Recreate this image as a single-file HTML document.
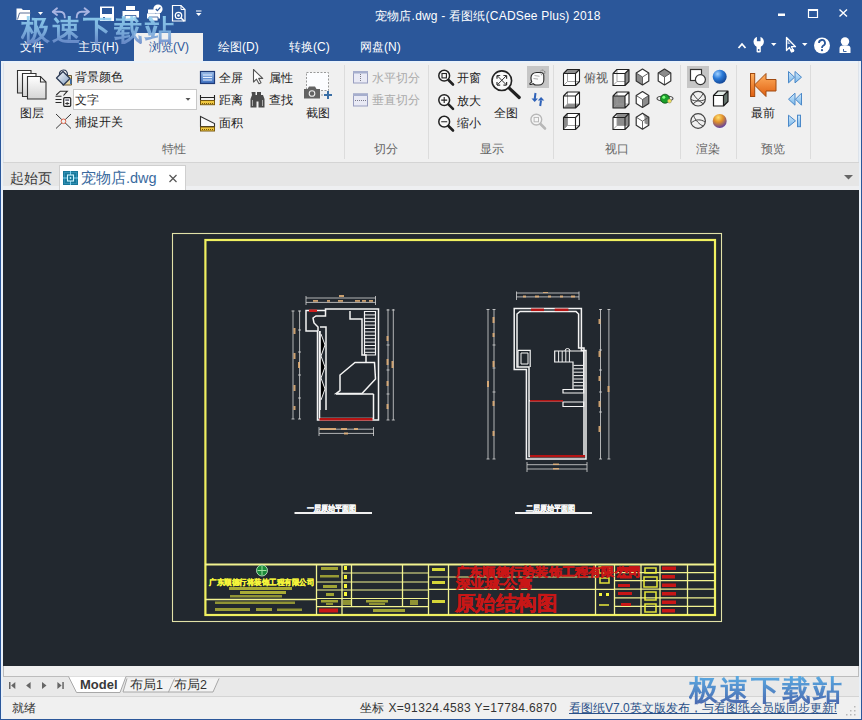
<!DOCTYPE html>
<html><head><meta charset="utf-8">
<style>
*{margin:0;padding:0;box-sizing:border-box}
html,body{width:862px;height:720px;overflow:hidden;background:#f0f0f0}
body{position:relative;font-family:"Liberation Sans",sans-serif;font-size:12px;color:#444}
.a{position:absolute;white-space:nowrap;line-height:1}
.tt{color:#fff;font-size:12px}
.sep{position:absolute;width:1px;background:#dcdcdc;top:65px;height:94px}
.gl{position:absolute;color:#666;font-size:12px;line-height:1;white-space:nowrap}
.lb{position:absolute;color:#222;font-size:12px;line-height:1;white-space:nowrap}
.wm{position:absolute;white-space:nowrap;line-height:1;font-family:"Liberation Sans",sans-serif;font-weight:bold;letter-spacing:0px}
</style></head><body>
<!-- header -->
<div class="a" style="left:0;top:0;width:862px;height:61px;background:#2b579a"></div>
<div class="a tt" style="left:375px;top:10px;font-size:12px;letter-spacing:0.2px">宠物店.dwg - 看图纸(CADSee Plus) 2018</div>
<div class="a" style="left:134px;top:33px;width:69px;height:29px;background:#f0f0f0"></div>
<div class="a tt" style="left:20px;top:41px">文件</div>
<div class="a tt" style="left:78px;top:41px">主页(H)</div>
<div class="a" style="left:149px;top:41px;color:#2b579a">浏览(V)</div>
<div class="a tt" style="left:218px;top:41px">绘图(D)</div>
<div class="a tt" style="left:289px;top:41px">转换(C)</div>
<div class="a tt" style="left:360px;top:41px">网盘(N)</div>

<!-- ribbon -->
<div class="a" style="left:1px;top:61px;width:860px;height:102px;background:#f0f0f0;border-bottom:1px solid #d4d4d4"></div>
<div class="a" style="left:3px;top:61px;width:1px;height:101px;background:#dde3ea"></div>
<div class="a" style="left:1px;top:61px;width:860px;height:2px;background:#eaf2fa"></div>
<div class="a" style="left:858px;top:61px;width:1px;height:101px;background:#dde3ea"></div>
<div class="sep" style="left:344px"></div>
<div class="sep" style="left:428px"></div>
<div class="sep" style="left:553px"></div>
<div class="sep" style="left:680px"></div>
<div class="sep" style="left:736px"></div>
<div class="sep" style="left:810px"></div>
<div class="gl" style="left:162px;top:143px">特性</div>
<div class="gl" style="left:374px;top:143px">切分</div>
<div class="gl" style="left:480px;top:143px">显示</div>
<div class="gl" style="left:605px;top:143px">视口</div>
<div class="gl" style="left:696px;top:143px">渲染</div>
<div class="gl" style="left:761px;top:143px">预览</div>

<div class="lb" style="left:20px;top:107px">图层</div>
<div class="lb" style="left:75px;top:71px">背景颜色</div>
<div class="a" style="left:73px;top:89px;width:124px;height:21px;background:#fff;border:1px solid #c8c8c8"></div>
<div class="lb" style="left:75px;top:94px">文字</div>
<div class="lb" style="left:75px;top:116px">捕捉开关</div>
<div class="lb" style="left:219px;top:72px">全屏</div>
<div class="lb" style="left:219px;top:94px">距离</div>
<div class="lb" style="left:219px;top:117px">面积</div>
<div class="lb" style="left:269px;top:72px">属性</div>
<div class="lb" style="left:269px;top:94px">查找</div>
<div class="lb" style="left:306px;top:107px">截图</div>
<div class="lb" style="left:372px;top:72px;color:#aaa">水平切分</div>
<div class="lb" style="left:372px;top:94px;color:#aaa">垂直切分</div>
<div class="lb" style="left:457px;top:72px">开窗</div>
<div class="lb" style="left:457px;top:95px">放大</div>
<div class="lb" style="left:457px;top:117px">缩小</div>
<div class="lb" style="left:494px;top:107px">全图</div>
<div class="lb" style="left:584px;top:72px;color:#555">俯视</div>
<div class="lb" style="left:751px;top:107px">最前</div>

<!-- doc tabs -->
<div class="a" style="left:1px;top:163px;width:860px;height:27px;background:#e6e6e6"></div>
<div class="a" style="left:1px;top:186px;width:860px;height:4px;background:#eeeff1"></div>
<div class="lb" style="left:10px;top:171px;font-size:14px;color:#3a3a3a">起始页</div>
<div class="a" style="left:59px;top:165px;width:127px;height:25px;background:#fff;border:1px solid #cfcfcf;border-bottom:none"></div>
<div class="a" style="left:81px;top:171px;font-size:14.5px;color:#3a6a9e">宠物店.dwg</div>

<!-- canvas -->
<div class="a" style="left:3px;top:190px;width:856px;height:476px;background:#22282f"></div>
<svg class="a" style="left:0;top:0" width="862" height="720" viewBox="0 0 862 720">
<g fill="none" stroke="#f2f290">
<rect x="172.5" y="233.5" width="549" height="388" stroke-width="1.1" stroke="#e2e2a8"/>
<rect x="205.4" y="240" width="509.6" height="375" stroke-width="2.2" stroke="#f0f060"/>
<path d="M205 564.5H715" stroke-width="1.8"/>
<path d="M205 599.5H316M316.5 564V615M342 564V615M351.5 564V606.5M402.5 564V606.5M428.5 564V615M448.5 564V615M595.5 564V615M614.5 564V615M641 564V615M660 564V615M687.5 564V615" stroke-width="1.3"/>
<path d="M342 573H428.5M316.5 582H428.5M316.5 590H428.5M316.5 598.5H428.5M316.5 606.6H428.5M428.5 577H595.5M428.5 589.3H595.5M595.5 589.3H614.5M614.5 572.6H715M614.5 580.7H715M614.5 589.2H715M614.5 597.8H715M614.5 606.4H715" stroke-width="1.2"/>
</g>
<circle cx="262" cy="570.5" r="5.5" fill="#1a8a3a" stroke="#d0f0d0" stroke-width="0.8"/><path d="M262 566v9M257.5 570.5h9" stroke="#9fe09f" stroke-width="1"/><g fill="#f5f53a" stroke="#f5f53a" stroke-width="0.3" font-family="Liberation Sans,sans-serif">
<text x="209" y="585" font-size="7.6" font-weight="bold" textLength="105" lengthAdjust="spacingAndGlyphs">广东顺德行将装饰工程有限公司</text>
</g>
<g fill="#f5f53a">
<rect x="229" y="587" width="63" height="3" opacity="0.64"/>
<rect x="240" y="591" width="46" height="3" opacity="0.64"/>
<rect x="230" y="595" width="52" height="2.5" opacity="0.52"/>
<rect x="215" y="601.5" width="80" height="2.5" opacity="0.52"/>
<rect x="215" y="608" width="35" height="3" opacity="0.56"/><rect x="256" y="608" width="16" height="3" opacity="0.56"/><rect x="277" y="608.5" width="25" height="2.5" opacity="0.52"/>
<rect x="321" y="567" width="17" height="3" opacity="0.60"/><rect x="320" y="575" width="19" height="2.5" opacity="0.56"/>
<rect x="323" y="585" width="14" height="3" opacity="0.60"/><rect x="326" y="593" width="8" height="3" opacity="0.60"/>
<rect x="321" y="600" width="17" height="2.5" opacity="0.60"/><rect x="326" y="603" width="7" height="2" opacity="0.52"/>
<rect x="344" y="566" width="3" height="4" /><rect x="344" y="575" width="3" height="4"/><rect x="344" y="584" width="3" height="4"/><rect x="344" y="592" width="3" height="4"/>
<rect x="343" y="600" width="8" height="5" opacity="0.52"/>
<rect x="366" y="600" width="22" height="2.5" opacity="0.60"/><rect x="369" y="603" width="16" height="2" opacity="0.52"/>
<rect x="410" y="600" width="8" height="5" opacity="0.52"/>
<rect x="373" y="609" width="32" height="3" opacity="0.60"/>
<rect x="432" y="568" width="13" height="3" opacity="0.85"/><rect x="432" y="581" width="13" height="3" opacity="0.85"/><rect x="432" y="600" width="13" height="3" opacity="0.85"/>
<path d="M599 567h11v6h-11zM600 578h9v5h-9zM645 568h11v5h-11zM644 577h13v10h-13zM645 592h11v8h-11zM645 604h11v8h-11z" fill="none" stroke="#f5f53a" stroke-width="1.6" opacity="0.9"/>
<rect x="599" y="593" width="3" height="3"/><rect x="606" y="593" width="3" height="3"/><rect x="599" y="604" width="10" height="2" opacity="0.7"/>
</g>
<g fill="#c81616">
<rect x="319" y="608.5" width="19" height="4"/>
<rect x="617" y="567" width="22" height="4"/><rect x="620" y="575.5" width="12" height="3"/><rect x="618" y="584" width="12" height="3"/><rect x="618" y="592" width="14" height="3"/><rect x="621" y="603" width="10" height="3"/>
<rect x="662" y="566.5" width="14" height="3.5"/><rect x="662" y="575" width="13" height="3.5"/><rect x="662" y="583.5" width="14" height="3.5"/><rect x="662" y="592" width="14" height="3.5"/><rect x="662" y="600.5" width="14" height="3.5"/><rect x="662" y="609" width="13" height="3.5"/>
</g>
<g fill="#c81616" stroke="#c81616" stroke-width="0.5" font-family="Liberation Sans,sans-serif" font-weight="bold">
<text x="456" y="575.5" font-size="12" textLength="185" lengthAdjust="spacingAndGlyphs">广东顺德行势装饰工程有限公司</text>
<text x="456" y="587.5" font-size="12" textLength="76" lengthAdjust="spacingAndGlyphs">深业城-公寓</text>
</g>
<text x="455" y="609.5" font-size="19.5" fill="#c81616" stroke="#c81616" stroke-width="0.4" font-weight="bold" font-family="Liberation Sans,sans-serif" textLength="102" lengthAdjust="spacingAndGlyphs">原始结构图</text>
<g fill="#f0f0f0">
<rect x="294.5" y="512" width="77.5" height="2"/>
<rect x="515" y="512" width="77" height="2"/>
</g>
<g fill="#f8f8f8" stroke="#f8f8f8" stroke-width="0.35" font-family="Liberation Sans,sans-serif" font-weight="bold" font-size="7.5">
<text x="306.5" y="510.5" textLength="49.5" lengthAdjust="spacingAndGlyphs">一层原始平面图</text>
<text x="526" y="510.5" textLength="49.5" lengthAdjust="spacingAndGlyphs">二层原始平面图</text>
</g>
<g fill="none" stroke="#f4f4f4" stroke-width="1.5">
<path d="M325.5 309H378.5V420H317.5V331H306V310.6H325.5z"/>
<path d="M319.5 331V418.5H373.5V394"/>
<path d="M325.5 310.6V316H316L313 318L314 323L318 327V331"/>
<path d="M320 327H326V410M320 331V410"/>
<path d="M350 311V319H362V355H366V362"/>
<path d="M364.5 311.5H375.5V355H364.5z" stroke-width="1.2"/>
<path d="M336 393.5L340 390.5V375L355 362.5H374.5L375.5 379L362 393.5z"/>
<path d="M336 394H373.5"/>
</g>
<g stroke="#f0f0f0" stroke-width="1">
<path d="M365 314.9H375 M365 318.3H375 M365 321.7H375 M365 325.1H375 M365 328.5H375 M365 331.9H375 M365 335.3H375 M365 338.7H375 M365 342.1H375 M365 345.5H375 M365 348.9H375 M365 352.3H375 "/><path d="M321 334L325 345L321 356L325 367L321 378L325 389L321 400"/></g><g fill="none" stroke="#d8d8d8" stroke-width="0.8">
<path d="M306 298H375.5M306 302.4H375.5M306 296V305M375.5 296V305"/>
<path d="M293 310.7V419M299.6 310.7V419M291.5 311h3M298 311h3M291.5 419h3M298 419h3M298 330h3M298 352h3M298 375h3M298 398h3"/>
<path d="M388 309V420M393.3 309V420M386.5 310h3M391.8 310h3M386.5 420h3M391.8 420h3M386.5 345h3M386.5 370h3M386.5 394h3"/>
<path d="M319 429.2H373M319 433.4H374M319 427V436M373.5 427V436"/>
</g>
<g fill="#b41414"><rect x="319.5" y="418" width="53" height="2.6"/><rect x="309" y="309.5" width="8" height="2.5" fill="#d02020"/></g>
<g fill="#e8b47a" opacity="0.85">
<rect x="293.5" y="328.0" width="2.0" height="6.0"/><rect x="293.5" y="353.0" width="2.0" height="6.0"/><rect x="293.5" y="385.0" width="2.0" height="6.0"/><rect x="293.5" y="406.0" width="2.0" height="4.0"/>
<rect x="298.0" y="362.0" width="2.0" height="6.0"/>
<rect x="386.5" y="336.0" width="2.0" height="5.0"/><rect x="386.5" y="359.0" width="2.0" height="6.0"/><rect x="386.5" y="381.0" width="2.0" height="5.0"/><rect x="386.5" y="404.0" width="2.0" height="5.0"/>
<rect x="391.5" y="361.0" width="2.0" height="7.0"/>
<rect x="339" y="295" width="5" height="2"/><rect x="313" y="300" width="5" height="1.8"/><rect x="327" y="300" width="3" height="1.8"/><rect x="338" y="300" width="5" height="1.8"/><rect x="355" y="300" width="5" height="1.8"/><rect x="362" y="300" width="4" height="1.8"/><rect x="369" y="300" width="4" height="1.8"/>
<rect x="320.0" y="428.0" width="16.0" height="2.0"/><rect x="341.0" y="428.0" width="6.0" height="2.0"/><rect x="354.0" y="428.0" width="4.0" height="2.0"/>
<rect x="344.0" y="432.5" width="4.0" height="2.0"/>
</g>
<g fill="none" stroke="#f4f4f4" stroke-width="1.5">
<path d="M514.2 308.6H581.4V350.4H586V459H526.4V369.4H514.2z"/>
<path d="M520 311.4H576L578.6 314V348H584V456.5H529V367H517V314z"/>
<path d="M518 350.4H530.2V367M518 350.4V367" stroke-width="1.2"/>
<path d="M521 353H528V364H521z" stroke-width="1"/>
<path d="M554.7 351H583.7V389.3H573V362H554.7z" stroke-width="1.2"/>
<path d="M563 389.5H583.7V393H563zM563 402H583.7V406.5H563z" stroke-width="1.2"/>
<path d="M565 351a2.5 2.5 0 0 1 5 0" stroke-width="1"/>
<path d="M529 400.8H563"/>
</g>
<g stroke="#f0f0f0" stroke-width="1"><path d="M573.5 365.4H583 M573.5 368.8H583 M573.5 372.2H583 M573.5 375.6H583 M573.5 379.0H583 M573.5 382.4H583 M573.5 385.8H583 M558.6 351V362 M562.2 351V362 M565.8 351V362 M569.4 351V362 "/></g><g fill="none" stroke="#d8d8d8" stroke-width="0.8">
<path d="M516.5 293H579M516.5 296.9H579M516.5 291.5V300M579 291.5V300"/>
<path d="M488 309V459M494 309V459M486.5 309.5h3M492.5 309.5h3M486.5 459h3M492.5 459h3M492.5 345h3M492.5 368h3M492.5 392h3"/>
<path d="M600.5 309V459M608.9 309V459M599 309.5h3M607.4 309.5h3M599 459h3M607.4 459h3M599 350h3M599 370h3M599 392h3M599 412h3"/>
<path d="M527 464.7H587M527 469H587M527 462V472M587 462V472"/>
</g>
<g fill="#b41414"><rect x="531" y="308.5" width="13" height="2.6"/><rect x="554.7" y="308.5" width="13.7" height="2.6"/><rect x="530" y="400" width="33" height="1.6"/><rect x="530" y="455" width="55" height="2.2"/></g>
<g fill="#e8b47a" opacity="0.85">
<rect x="492.5" y="317.0" width="2.0" height="6.0"/><rect x="492.5" y="333.0" width="2.0" height="4.0"/><rect x="492.5" y="361.0" width="2.0" height="6.0"/><rect x="492.5" y="401.0" width="2.0" height="5.0"/><rect x="492.5" y="431.0" width="2.0" height="5.0"/><rect x="487.0" y="381.0" width="2.0" height="6.0"/>
<rect x="598.5" y="319.0" width="2.0" height="5.0"/><rect x="598.5" y="351.0" width="2.0" height="6.0"/><rect x="598.5" y="376.0" width="2.0" height="5.0"/><rect x="598.5" y="401.0" width="2.0" height="6.0"/><rect x="598.5" y="426.0" width="2.0" height="6.0"/><rect x="607.5" y="386.0" width="2.0" height="6.0"/>
<rect x="523.0" y="295.5" width="3.0" height="2.0"/><rect x="535.0" y="295.5" width="4.0" height="2.0"/><rect x="548.0" y="295.5" width="3.0" height="2.0"/><rect x="560.0" y="295.5" width="3.0" height="2.0"/><rect x="571.0" y="295.5" width="4.0" height="2.0"/><rect x="543.0" y="292.0" width="5.0" height="1.0"/>
<rect x="553.0" y="463.5" width="6.0" height="1.5"/><rect x="553.0" y="468.0" width="6.0" height="1.5"/>
</g>
</svg>


<!-- layout bar -->
<div class="a" style="left:3px;top:666px;width:856px;height:11px;background:#f0f0f0;border:1px solid #bcbcbc;border-top:none"></div>
<div class="a" style="left:1px;top:677px;width:860px;height:20px;background:#e9e9e9;border-bottom:1px solid #d4d4d4"></div>
<svg class="a" style="left:0;top:670px" width="260" height="30" viewBox="0 670 260 30">
<path d="M172 678.5L168 692H213L219 678.5" fill="#f3f3f3" stroke="#a8a8a8" stroke-width="1"/>
<path d="M127 678.5L123 692H168.5L174.5 678.5" fill="#f3f3f3" stroke="#a8a8a8" stroke-width="1"/>
<path d="M68.5 676.5L76.5 692.5H120L126 676.5" fill="#fff" stroke="#a8a8a8" stroke-width="1"/>
</svg>
<div class="a" style="left:80px;top:677.5px;font-weight:bold;font-size:13px;color:#3a3a3a">Model</div>
<div class="a" style="left:130px;top:679px;font-size:12.5px;color:#333">布局1</div>
<div class="a" style="left:174px;top:679px;font-size:12.5px;color:#333">布局2</div>
<!-- status -->
<div class="a" style="left:1px;top:697px;width:860px;height:22px;background:#f0f0f0"></div>
<div class="a" style="left:12px;top:702px;font-size:12px;color:#333">就绪</div>
<div class="a" style="left:360px;top:702px;font-size:12px;letter-spacing:0.35px;color:#333">坐标 X=91324.4583 Y=17784.6870</div>
<div class="a" style="left:569px;top:702px;font-size:12px;color:#2a5088;text-decoration:underline">看图纸V7.0英文版发布，与看图纸会员版同步更新!</div>


<svg class="a" style="left:0;top:0" width="862" height="720" viewBox="0 0 862 720">
<defs>
<linearGradient id="pg" x1="0" y1="0" x2="0" y2="1"><stop offset="0" stop-color="#ffffff"/><stop offset="1" stop-color="#d4d4d4"/></linearGradient>
<linearGradient id="bl" x1="0" y1="0" x2="0" y2="1"><stop offset="0" stop-color="#9fc0ea"/><stop offset="1" stop-color="#3c6fc0"/></linearGradient>
<radialGradient id="sph" cx="0.35" cy="0.3" r="0.7"><stop offset="0" stop-color="#9fd0ff"/><stop offset="0.5" stop-color="#2a7ad8"/><stop offset="1" stop-color="#154a9a"/></radialGradient>
<radialGradient id="sph2" cx="0.4" cy="0.25" r="0.75"><stop offset="0" stop-color="#ffe070"/><stop offset="0.45" stop-color="#e0902a"/><stop offset="1" stop-color="#6040a0"/></radialGradient>
<linearGradient id="org" x1="0" y1="0" x2="0" y2="1"><stop offset="0" stop-color="#ffb060"/><stop offset="1" stop-color="#e06010"/></linearGradient>
<linearGradient id="lbl" x1="0" y1="0" x2="0" y2="1"><stop offset="0" stop-color="#d0e8fb"/><stop offset="1" stop-color="#7ab8ea"/></linearGradient>
</defs>
<!-- quick access -->
<g fill="none" stroke="#fff" stroke-width="1.3">
 <path d="M16.5 20V8.5h5l1.5 1.5h7v10z" fill="#fff" stroke="none"/>
 <path d="M17.5 19.5l2-6.5h11.5" stroke="#5a6f96" stroke-width="1"/>
</g>
<path d="M38 12h5l-2.5 3z" fill="#fff"/>
<g fill="none" stroke="#a9b5e2" stroke-width="1.9" stroke-linecap="round" stroke-linejoin="round">
 <path d="M57 8.3L52.8 11.8L57 14.9"/><path d="M53 11.8H60c3 0 4.8 2 4.8 5.6"/>
 <path d="M84.6 8.3L88.8 11.8L84.6 14.9"/><path d="M88.6 11.8H81.5c-3 0-4.8 2-4.8 5.6"/>
</g>
<g fill="#fff">
 <path d="M100 6.5h14v14.5h-14zM102 8v6h10v-6z" fill-rule="evenodd"/>
 <rect x="103" y="17" width="2" height="3" fill="#2b579a"/>
 <path d="M126 6h9v4h-9z"/><path d="M122.5 11h16.5v6.5h-16.5z"/><path d="M125 15.5h11v5.5h-11z" stroke="#2b579a" stroke-width="0.8"/>
 <path d="M148 9.5h7v4h-7z"/><path d="M147 13.5h13v5h-13z"/><path d="M149 17h9v4h-9z" stroke="#2b579a" stroke-width="0.8"/>
 <circle cx="158" cy="9" r="4.6"/>
 </g>
<path d="M172.5 5.5h8.5l4 4v11.5h-12.5z" fill="none" stroke="#fff" stroke-width="1.2"/>
<path d="M155.8 9l1.6 1.6 3-3.2" fill="none" stroke="#2b579a" stroke-width="1.3"/>
<path d="M181 5.5v4h4" fill="none" stroke="#fff" stroke-width="1"/>
<circle cx="178.5" cy="15.5" r="3.2" fill="none" stroke="#fff" stroke-width="1.3"/><circle cx="178.5" cy="15.5" r="1.3" fill="#fff"/>
<path d="M180.8 17.8l3.5 3.5" stroke="#fff" stroke-width="1.6"/>
<path d="M196 11h5.5" stroke="#fff" stroke-width="1"/><path d="M196 13h5.5l-2.75 3z" fill="#fff"/>
<!-- window controls -->
<rect x="778" y="13.5" width="7" height="2.5" fill="#fff"/>
<path d="M808.5 9.5h9v8h-9z" fill="none" stroke="#fff" stroke-width="1.2"/><rect x="808" y="9" width="10" height="2" fill="#fff"/>
<path d="M839.5 9.5l7.5 7M847 9.5l-7.5 7" stroke="#fff" stroke-width="1.4"/>
<!-- tab row right -->
<path d="M738.5 48l3.5-4 3.5 4" fill="none" stroke="#fff" stroke-width="1.8"/>
<circle cx="758.7" cy="41.8" r="5.2" fill="#fff"/><rect x="756.9" y="36" width="3.6" height="5.2" fill="#2b579a"/><rect x="756.6" y="44" width="4.2" height="8.5" rx="1.2" fill="#fff"/><circle cx="758.7" cy="50" r="0.9" fill="#2b579a"/>
<path d="M771 43h5.5l-2.75 3z" fill="#fff"/>
<path d="M786.5 37.5v13l3-3 2 4.5 2-1-2-4.3h4z" fill="#2b579a" stroke="#fff" stroke-width="1.3" stroke-linejoin="round"/><path d="M787.5 40v4l3 0z" fill="#fff" opacity="0.6"/><circle cx="792.5" cy="50.5" r="1.8" fill="#fff"/>
<path d="M802 43h5.5l-2.75 3z" fill="#fff"/>
<circle cx="822" cy="45.5" r="8" fill="#fff"/>
<path d="M819 43a3 3 0 1 1 4 2.8c-1 .5-1 1-1 2.2" fill="none" stroke="#2b579a" stroke-width="1.8"/><circle cx="822" cy="50.2" r="1.1" fill="#2b579a"/>
<circle cx="845" cy="41.5" r="4.2" fill="#fff"/>
<path d="M839.5 53v-4.5a3 3 0 0 1 3-3h5a3 3 0 0 1 3 3v4.5z" fill="#fff"/>
<path d="M843.5 49v2.5h3" fill="none" stroke="#2b579a" stroke-width="0.9"/>

<!-- ribbon: layers -->
<g stroke="#333" stroke-width="1.1" fill="url(#pg)">
 <path d="M17.5 70.5h13.5v22.5h-13.5z"/>
 <path d="M22.5 73.5h13.5v23h-13.5z"/>
 <path d="M27.5 76.5h13l5.5 5.5v17h-18.5z"/>
</g>
<path d="M40.5 76.5v5.5h5.5" fill="none" stroke="#333" stroke-width="1.1"/>
<!-- paint bucket -->
<linearGradient id="bk" x1="0" y1="0" x2="1" y2="1"><stop offset="0" stop-color="#ffffff"/><stop offset="1" stop-color="#7f9cc0"/></linearGradient>
<path d="M62.5 75.5h9v9.5h-9z" fill="#e9d9a6" stroke="#6a5a35" stroke-width="1"/>
<path d="M56.5 78l6.5-6.5 7 7-6.5 6.5z" fill="url(#bk)" stroke="#2d3b55" stroke-width="1.3" stroke-linejoin="round"/>
<path d="M59.5 75c-0.5-3 1.5-5 4-5s4 2 4 5" fill="none" stroke="#2d3b55" stroke-width="1.2"/>
<path d="M70.8 79v5" stroke="#3a6fb0" stroke-width="1.6"/>
<!-- text style icon -->
<g fill="none" stroke="#2a2a2a" stroke-width="1.1">
 <path d="M56.3 95l4-3.8h7l-3.8 4.3"/>
 <path d="M55.5 96.3h6M55.5 99.5h6M55.5 102.5h6"/>
</g>
<rect x="63.7" y="97.7" width="7" height="8.6" rx="1" fill="#fafafa" stroke="#222" stroke-width="1.2"/>
<rect x="65.3" y="99.3" width="3.8" height="1.6" fill="#667"/>
<path d="M65.3 103.5h4" stroke="#333" stroke-width="1"/><circle cx="67.3" cy="103.5" r="1" fill="none" stroke="#333" stroke-width="0.7"/>
<!-- snap -->
<path d="M56 114l15 14.5M71 114l-15 14.5" stroke="#3a3a3a" stroke-width="1"/>
<circle cx="63.5" cy="121.3" r="2.3" fill="#f0f0f0" stroke="#e06a50" stroke-width="1"/>
<!-- dropdown arrow -->
<path d="M185.5 98h5l-2.5 2.7z" fill="#555"/>

<!-- fullscreen -->
<rect x="200.5" y="71.5" width="14" height="12" fill="url(#bl)" stroke="#1f3b78" stroke-width="1.2"/>
<path d="M203 75h9M203 77.5h9M203 80h9" stroke="#e8f0ff" stroke-width="1"/>
<!-- distance -->
<path d="M200.5 95v5M214.5 95v5M201 97.5h13" stroke="#222" stroke-width="1.1"/>
<rect x="200.5" y="100.5" width="14" height="4.2" fill="#f0c840" stroke="#7a5a10" stroke-width="1"/>
<path d="M202 103.5h11" stroke="#7a5a10" stroke-width="1" stroke-dasharray="1 1"/>
<!-- area -->
<path d="M200.5 116.5l14 7v3h-14z" fill="#fafafa" stroke="#333" stroke-width="1.1"/>
<rect x="200.5" y="127" width="14" height="4" fill="#f0c840" stroke="#7a5a10" stroke-width="1"/>
<path d="M202 129.5h11" stroke="#7a5a10" stroke-width="1" stroke-dasharray="1 1"/>
<!-- cursor -->
<path d="M253.5 69.5v12.5l3-2.8 2.5 4.5 2-1-2.3-4.3h4z" fill="#fff" stroke="#555" stroke-width="1.1" stroke-linejoin="round"/>
<!-- binoculars -->
<path d="M251.5 92h4v3h1.5v-3h4v3h2l1.5 4v8.5h-6v-6h-2v6h-6v-8.5l1.5-4z" fill="#4a4a4a"/>
<path d="M252.5 100v6M262.5 100v6" stroke="#aaa" stroke-width="1"/>
<!-- screenshot -->
<rect x="306.5" y="72.5" width="22" height="18" fill="#fcfdff" stroke="#999" stroke-width="1" stroke-dasharray="2 1.5"/>
<path d="M304 89h3.5l1.5-2.5h6l1.5 2.5h3.5v9.5h-16z" fill="#636363"/>
<circle cx="312" cy="93.5" r="2.8" fill="#636363" stroke="#eee" stroke-width="1.1"/>
<path d="M321 95h2" stroke="#888" stroke-width="0.8"/>
<path d="M324 95h8M328 91v8" stroke="#3a6ea5" stroke-width="2"/>
<!-- split icons -->
<g opacity="0.85">
<rect x="353.5" y="71.5" width="14" height="11.5" fill="#e8eaf6" stroke="#8a90b8" stroke-width="1"/>
<rect x="353" y="71" width="15" height="2.5" fill="#9aa3c8"/>
<path d="M360.5 74v8" stroke="#667" stroke-width="1" stroke-dasharray="1 1"/>
<rect x="353.5" y="94" width="14" height="12" fill="#e8eaf6" stroke="#8a90b8" stroke-width="1"/>
<rect x="353" y="93.5" width="15" height="2.5" fill="#9aa3c8"/>
<path d="M355 100.5h11" stroke="#667" stroke-width="1" stroke-dasharray="1 1"/>
</g>
<!-- display group -->

<g fill="#f9f9f9" stroke="#222" stroke-width="1.5">
 <circle cx="444.2" cy="75.7" r="5.4"/><circle cx="444.2" cy="100.1" r="5.4"/><circle cx="444.2" cy="121.7" r="5.4"/>
</g>
<g fill="none" stroke="#222" stroke-width="1.1">
 <rect x="442" y="73.5" width="4.4" height="4.4"/>
 <path d="M441.2 100.1h6M444.2 97.1v6M441.2 121.7h6"/>
</g>
<g stroke="#222" stroke-width="2.6" stroke-linecap="round">
 <path d="M448.5 80l4.5 4.5M448.5 104.4l4.5 4.5M448.5 126l4.5 4.5"/>
</g>
<circle cx="501.8" cy="80.7" r="9.8" fill="#fafafa" stroke="#222" stroke-width="1.6"/>
<path d="M509.2 88.1l10 9.4" stroke="#222" stroke-width="3.2" stroke-linecap="round"/>
<g stroke="#333" stroke-width="1" fill="none">
 <path d="M497.5 76l8.6 8.6M506.1 76l-8.6 8.6"/>
 <path d="M497 75.5h3.2M497 75.5v3.2M506.6 75.5h-3.2M506.6 75.5v3.2M497 85.1h3.2M497 85.1v-3.2M506.6 85.1h-3.2M506.6 85.1v-3.2" stroke-width="1.2"/>
</g>
<rect x="527" y="66" width="22" height="22" fill="#c6c6c6"/>
<path d="M531 77.5c0-2.8 2.5-5 5.5-5h4c2 0 3.3 1.3 3.3 3.3v4.2c0 2.8-2 5-5 5h-3c-1.2 0-2-.5-2.6-1.3l-2.2.8c-1 .3-1.6-.8-.8-1.4l1.6-1.2c-.5-1-.8-2-.8-3.4z" fill="#fbfbfb" stroke="#2a2a2a" stroke-width="1.1"/>
<path d="M533.5 78.5l4.5.6M534.5 75.5l5 .8" stroke="#999" stroke-width="0.8" fill="none"/>
<circle cx="542.5" cy="72.5" r="2.4" fill="none" stroke="#555" stroke-width="0.9" stroke-dasharray="1 1"/>
<path d="M535.5 93l-.8 6" stroke="#2f62b8" stroke-width="2"/><path d="M531.5 98.5h6.5l-3.3 3.6z" fill="#2f62b8"/>
<path d="M541 100.5l-.8 5.5" stroke="#2f62b8" stroke-width="2"/><path d="M537.8 100.5h6.5l-3.2-3.6z" fill="#2f62b8"/>
<g fill="none" stroke="#b8b8b8" stroke-width="1.4"><circle cx="536.3" cy="119.6" r="5.4" fill="#f6f6f6"/><rect x="534.1" y="117.4" width="4.4" height="4.4" stroke-width="1"/></g>
<path d="M540.5 124l4.5 4.5" stroke="#b8b8b8" stroke-width="2.6" stroke-linecap="round"/>
<!-- viewport cubes --><path d="M563.5 73.5H575.5V85.5H563.5z" fill="#fff"/><path d="M567.5 69.5H579.5V81.5H567.5z" fill="#fff"/><path d="M563.5 73.5L567.5 69.5H579.5L575.5 73.5z" fill="#8c8c8c"/><path d="M567.5 69.5V81.5H579.5M567.5 81.5L563.5 85.5" fill="none" stroke="#999" stroke-width="0.9"/><path d="M563.5 73.5H575.5V85.5H563.5zM563.5 73.5L567.5 69.5H579.5L575.5 73.5M579.5 69.5V81.5L575.5 85.5" fill="none" stroke="#222" stroke-width="1.1" stroke-linejoin="round"/><path d="M563.5 96.0H575.5V108.0H563.5z" fill="#fff"/><path d="M567.5 92.0H579.5V104.0H567.5z" fill="#fff"/><path d="M563.5 108.0L567.5 104.0H579.5L575.5 108.0z" fill="#8c8c8c"/><path d="M567.5 92.0V104.0H579.5M567.5 104.0L563.5 108.0" fill="none" stroke="#999" stroke-width="0.9"/><path d="M563.5 96.0H575.5V108.0H563.5zM563.5 96.0L567.5 92.0H579.5L575.5 96.0M579.5 92.0V104.0L575.5 108.0" fill="none" stroke="#222" stroke-width="1.1" stroke-linejoin="round"/><path d="M563.5 117.5H575.5V129.5H563.5z" fill="#fff"/><path d="M567.5 113.5H579.5V125.5H567.5z" fill="#fff"/><path d="M563.5 117.5L567.5 113.5V125.5L563.5 129.5z" fill="#8c8c8c"/><path d="M567.5 113.5V125.5H579.5M567.5 125.5L563.5 129.5" fill="none" stroke="#999" stroke-width="0.9"/><path d="M563.5 117.5H575.5V129.5H563.5zM563.5 117.5L567.5 113.5H579.5L575.5 117.5M579.5 113.5V125.5L575.5 129.5" fill="none" stroke="#222" stroke-width="1.1" stroke-linejoin="round"/><path d="M613.0 73.5H625.0V85.5H613.0z" fill="#fff"/><path d="M617.0 69.5H629.0V81.5H617.0z" fill="#fff"/><path d="M625.0 73.5L629.0 69.5V81.5L625.0 85.5z" fill="#8c8c8c"/><path d="M617.0 69.5V81.5H629.0M617.0 81.5L613.0 85.5" fill="none" stroke="#999" stroke-width="0.9"/><path d="M613.0 73.5H625.0V85.5H613.0zM613.0 73.5L617.0 69.5H629.0L625.0 73.5M629.0 69.5V81.5L625.0 85.5" fill="none" stroke="#222" stroke-width="1.1" stroke-linejoin="round"/><path d="M613.0 96.0H625.0V108.0H613.0z" fill="#fff"/><path d="M617.0 92.0H629.0V104.0H617.0z" fill="#fff"/><path d="M613.0 96.0H625.0V108.0H613.0z" fill="#8c8c8c"/><path d="M617.0 92.0V104.0H629.0M617.0 104.0L613.0 108.0" fill="none" stroke="#999" stroke-width="0.9"/><path d="M613.0 96.0H625.0V108.0H613.0zM613.0 96.0L617.0 92.0H629.0L625.0 96.0M629.0 92.0V104.0L625.0 108.0" fill="none" stroke="#222" stroke-width="1.1" stroke-linejoin="round"/><path d="M613.0 117.5H625.0V129.5H613.0z" fill="#fff"/><path d="M617.0 113.5H629.0V125.5H617.0z" fill="#fff"/><path d="M617.0 113.5H629.0V125.5H617.0z" fill="#8c8c8c"/><path d="M617.0 113.5V125.5H629.0M617.0 125.5L613.0 129.5" fill="none" stroke="#999" stroke-width="0.9"/><path d="M613.0 117.5H625.0V129.5H613.0zM613.0 117.5L617.0 113.5H629.0L625.0 117.5M629.0 113.5V125.5L625.0 129.5" fill="none" stroke="#222" stroke-width="1.1" stroke-linejoin="round"/><path d="M642.50 69.00L648.80 73.00L648.80 81.00L642.50 85.00L636.20 81.00L636.20 73.00z" fill="#fff"/><path d="M642.50 77.00L642.50 85.00L636.20 81.00L636.20 73.00z" fill="#8c8c8c"/><path d="M636.20 73.00L642.50 77.00L648.80 73.00M642.50 77.00L642.50 85.00" fill="none" stroke="#555" stroke-width="0.9"/><path d="M642.50 69.00L648.80 73.00L648.80 81.00L642.50 85.00L636.20 81.00L636.20 73.00z" fill="none" stroke="#333" stroke-width="1.2" stroke-linejoin="round"/><path d="M642.50 91.50L648.80 95.50L648.80 103.50L642.50 107.50L636.20 103.50L636.20 95.50z" fill="#fff"/><path d="M642.50 99.50L642.50 107.50L648.80 103.50L648.80 95.50z" fill="#8c8c8c"/><path d="M636.20 95.50L642.50 99.50L648.80 95.50M642.50 99.50L642.50 107.50" fill="none" stroke="#555" stroke-width="0.9"/><path d="M642.50 91.50L648.80 95.50L648.80 103.50L642.50 107.50L636.20 103.50L636.20 95.50z" fill="none" stroke="#333" stroke-width="1.2" stroke-linejoin="round"/><path d="M642.50 113.20L648.80 117.20L648.80 125.20L642.50 129.20L636.20 125.20L636.20 117.20z" fill="#fff"/><path d="M642.50 113.20L648.80 117.20L648.80 125.20L644.50 123.20L644.50 117.20z" fill="#8c8c8c"/><path d="M636.20 117.20L642.50 121.20L648.80 117.20M642.50 121.20L642.50 129.20" fill="none" stroke="#555" stroke-width="0.9"/><path d="M642.50 113.20L648.80 117.20L648.80 125.20L642.50 129.20L636.20 125.20L636.20 117.20z" fill="none" stroke="#333" stroke-width="1.2" stroke-linejoin="round"/><path d="M664.50 69.00L670.80 73.00L670.80 81.00L664.50 85.00L658.20 81.00L658.20 73.00z" fill="#fff"/><path d="M664.50 77.00L658.20 73.00L664.50 69.00L670.80 73.00z" fill="#8c8c8c"/><path d="M658.20 73.00L664.50 77.00L670.80 73.00M664.50 77.00L664.50 85.00" fill="none" stroke="#555" stroke-width="0.9"/><path d="M664.50 69.00L670.80 73.00L670.80 81.00L664.50 85.00L658.20 81.00L658.20 73.00z" fill="none" stroke="#333" stroke-width="1.2" stroke-linejoin="round"/>
<ellipse cx="665" cy="98.5" rx="8" ry="2.5" fill="none" stroke="#555" stroke-width="1.2"/>
<circle cx="665" cy="98.7" r="4.5" fill="#1aa02a" stroke="#0a4a10" stroke-width="0.8"/>
<circle cx="663.8" cy="97.3" r="1.5" fill="#80ff80"/>
<circle cx="669.5" cy="101" r="2" fill="#f0e060" stroke="#886" stroke-width="0.5"/>
<!-- render -->
<rect x="687" y="66" width="22" height="22" fill="#c6c6c6"/>
<rect x="690.5" y="69.5" width="11" height="11" fill="#fff" stroke="#333" stroke-width="1.2"/>
<circle cx="700.4" cy="79.6" r="5" fill="#fff" stroke="#333" stroke-width="1.2"/>
<circle cx="719.7" cy="76.7" r="7" fill="url(#sph)"/>
<g fill="none" stroke="#444" stroke-width="1.2">
<circle cx="698.1" cy="98.7" r="7.3"/><path d="M692.9 93.5c3 5 7 8 10.4 10.4M703.3 93.5c-3 5-7 8-10.4 10.4M691 99.5c4 2 10 2 14 0" stroke-width="1"/>
<circle cx="698.1" cy="121" r="7.3"/><path d="M691.2 123c4-4 10-4 13.8-1M693.5 115.5c2 5 6 9 9.5 10.5" stroke-width="1"/>
</g>
<path d="M713.5 95.5l4.5-4.5h10v10.5l-4.5 4.5h-10z" fill="#fff"/>
<path d="M723.5 95.5l4.5-4.5v10.5l-4.5 4.5z" fill="#66756e"/>
<path d="M713.5 95.5l4.5-4.5h10l-4.5 4.5z" fill="#e4ece8"/>
<path d="M713.5 95.5l4.5-4.5h10v10.5l-4.5 4.5h-10zM713.5 95.5h10l4.5-4.5M723.5 95.5v10.5" fill="none" stroke="#1a1a1a" stroke-width="1.2" stroke-linejoin="round"/>
<circle cx="719.7" cy="121" r="7" fill="url(#sph2)"/>
<!-- preview -->
<rect x="750.5" y="73.5" width="4.2" height="23" fill="url(#org)" stroke="#a04a10" stroke-width="1"/>
<path d="M754.5 85l11.5-11.5v6h10v11.5h-10v5.5z" fill="url(#org)" stroke="#a04a10" stroke-width="1"/>
<g fill="url(#lbl)" stroke="#4a88c8" stroke-width="1">
<path d="M788.5 71.5l6 5.7-6 5.7zM795 71.5l6.5 5.7-6.5 5.7z"/>
<path d="M801.5 93.2l-6 6-0 0 6 6zM795 93.2l-6.5 6 6.5 6z"/>
<path d="M788.5 115.2l7 5.7-7 5.7z"/><rect x="797.5" y="115.2" width="3" height="11.5"/>
</g>
<!-- doc tab icon -->
<rect x="63" y="171" width="15" height="14" fill="#17789a"/>
<rect x="64.5" y="172.5" width="12" height="11" fill="none" stroke="#5ab0d8" stroke-width="0.8" stroke-dasharray="1 1"/>
<path d="M70.5 171v14M63 178h15" stroke="#7ed0f0" stroke-width="1"/>
<rect x="67.5" y="175" width="6" height="6" fill="#17789a" stroke="#d0f4ff" stroke-width="1.1"/>
<circle cx="70.5" cy="178" r="0.9" fill="#c0f0ff"/>
<path d="M169.5 175l7 7M176.5 175l-7 7" stroke="#555" stroke-width="1.2"/>
<path d="M844 175h9l-4.5 4.6z" fill="#666"/>
<!-- layout nav -->
<g fill="#666">
<rect x="9" y="682" width="1.5" height="7"/><path d="M15.3 682v7l-4.2-3.5z"/>
<path d="M30.6 682v7l-4.5-3.5z"/>
<path d="M42 682v7l4.5-3.5z"/>
<path d="M57.4 682v7l4.2-3.5z"/><rect x="62.3" y="682" width="1.5" height="7"/>
</g>

</svg>


<svg class="a" style="left:846px;top:702px" width="14" height="16"><g fill="#b8b8b8"><rect x="8" y="4" width="1.5" height="1.5"/><rect x="8" y="8" width="1.5" height="1.5"/><rect x="4" y="8" width="1.5" height="1.5"/><rect x="8" y="12" width="1.5" height="1.5"/><rect x="4" y="12" width="1.5" height="1.5"/><rect x="0" y="12" width="1.5" height="1.5"/></g></svg>
<div class="a" style="left:1px;top:61px;width:2px;height:658px;background:#e9f0f8"></div>
<div class="a" style="left:859px;top:61px;width:2px;height:658px;background:#e9f0f8"></div>
<!-- window border -->
<div class="a" style="left:0;top:0;width:1px;height:720px;background:#2b579a"></div>
<div class="a" style="left:861px;top:0;width:1px;height:720px;background:#2b579a"></div>
<div class="a" style="left:0;top:719px;width:862px;height:1px;background:#2b579a"></div>

<!-- watermarks -->
<div class="wm" style="left:21px;top:16px;font-size:29px;letter-spacing:2px;background:linear-gradient(#94d4f2 0%,#86bce6 45%,#6a88c8 100%);-webkit-background-clip:text;background-clip:text;color:transparent;opacity:0.9">极速下载站</div>
<div class="wm" style="left:689px;top:676px;font-size:29px;letter-spacing:2px;background:linear-gradient(#5aaae2,#4a68ae);-webkit-background-clip:text;background-clip:text;color:transparent">极速下载站</div>
</body></html>
